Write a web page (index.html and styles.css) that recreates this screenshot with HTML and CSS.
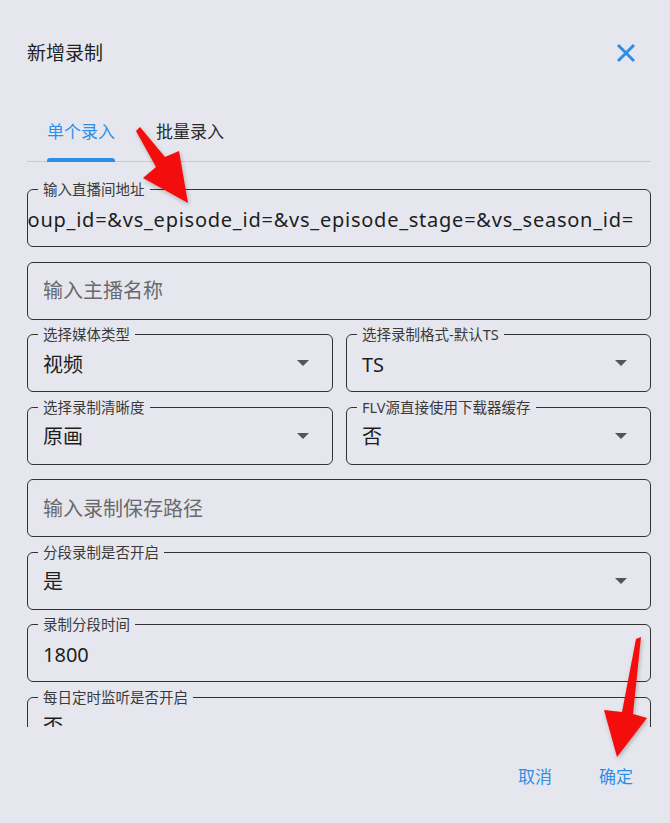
FILE: index.html
```html
<!DOCTYPE html>
<html lang="zh-CN">
<head>
<meta charset="utf-8">
<title>新增录制</title>
<link rel="stylesheet" href="styles.css">
</head>
<body>
<div class="dialog">
  <div class="header">
    <div class="title">新增录制</div>
    <svg class="close" width="20" height="20" viewBox="0 0 20 20"><path d="M2 2 L18 18 M18 2 L2 18" stroke="#2e8ee6" stroke-width="3" fill="none" stroke-linecap="butt"/></svg>
  </div>
  <div class="tabs">
    <div class="tab active"><span class="tab-text">单个录入</span><span class="indicator"></span></div>
    <div class="tab"><span class="tab-text">批量录入</span><span class="indicator"></span></div>
  </div>
  <div class="scroll">
    <div class="field">
      <span class="label">输入直播间地址</span>
      <div class="value url"><span>https://live.example.com/12345?live_from=85001&amp;vs_group_id=&amp;vs_episode_id=&amp;vs_episode_stage=&amp;vs_season_id=</span></div>
    </div>
    <div class="field">
      <div class="value placeholder">输入主播名称</div>
    </div>
    <div class="row">
      <div class="field">
        <span class="label">选择媒体类型</span>
        <div class="value">视频</div>
        <span class="caret"></span>
      </div>
      <div class="field">
        <span class="label">选择录制格式-默认TS</span>
        <div class="value">TS</div>
        <span class="caret"></span>
      </div>
    </div>
    <div class="row">
      <div class="field">
        <span class="label">选择录制清晰度</span>
        <div class="value">原画</div>
        <span class="caret"></span>
      </div>
      <div class="field">
        <span class="label">FLV源直接使用下载器缓存</span>
        <div class="value">否</div>
        <span class="caret"></span>
      </div>
    </div>
    <div class="field">
      <div class="value placeholder">输入录制保存路径</div>
    </div>
    <div class="field">
      <span class="label">分段录制是否开启</span>
      <div class="value">是</div>
      <span class="caret"></span>
    </div>
    <div class="field">
      <span class="label">录制分段时间</span>
      <div class="value">1800</div>
    </div>
    <div class="field">
      <span class="label">每日定时监听是否开启</span>
      <div class="value">否</div>
      <span class="caret"></span>
    </div>
  </div>
  <div class="footer">
    <span class="btn">取消</span>
    <span class="btn">确定</span>
  </div>
</div>
<svg class="annot" width="670" height="823" viewBox="0 0 670 823">
  <defs>
    <filter id="sh" x="-20%" y="-20%" width="140%" height="140%">
      <feDropShadow dx="1" dy="2" stdDeviation="2" flood-color="#000" flood-opacity="0.25"/>
    </filter>
  </defs>
  <polygon filter="url(#sh)" fill="#f40a0a" points="136,131 140,127 165,157 179,151 188,203 143,178 156,167"/>
  <polygon filter="url(#sh)" fill="#f40a0a" points="636,639 641,637 633,714 647,718 617,757 604,710 622,712"/>
</svg>
</body>
</html>
```

FILE: styles.css
```css
html, body {
  margin: 0;
  padding: 0;
}
body {
  width: 670px;
  height: 823px;
  overflow: hidden;
  background: #e6e7ee;
  font-family: "Noto Sans", "Noto Sans CJK SC", sans-serif;
  color: #1e1e1e;
  position: relative;
}
.dialog {
  display: flex;
  flex-direction: column;
  height: 823px;
  padding: 0 19px 0 27px;
}
.header {
  height: 106px;
  display: flex;
  align-items: center;
  justify-content: space-between;
}
.title {
  font-size: 19px;
  line-height: 24px;
  color: #222;
}
.close {
  margin-right: 15px;
}
.tabs {
  display: flex;
  gap: 41px;
  padding-left: 20px;
  border-bottom: 1px solid #c9cad3;
  height: 55px;
}
.tab {
  display: flex;
  flex-direction: column;
  align-items: stretch;
  margin-bottom: -1px;
}
.tab-text {
  font-size: 17px;
  line-height: 20px;
  padding-top: 16px;
  padding-bottom: 16px;
  color: #2a2a2a;
}
.tab .indicator {
  height: 4px;
  border-radius: 3px 3px 0 0;
  background: transparent;
}
.tab.active .tab-text {
  color: #2e8ee6;
}
.tab.active .indicator {
  background: #2e8ee6;
}
.scroll {
  height: 565px;
  overflow: hidden;
  padding-top: 27px;
  box-sizing: border-box;
  display: flex;
  flex-direction: column;
  gap: 14.5px;
}
.row {
  display: grid;
  grid-template-columns: 306px 305px;
  gap: 13px;
}
.field {
  position: relative;
  box-sizing: border-box;
  height: 58px;
  flex: none;
  border: 1.2px solid #333;
  border-radius: 6px;
  display: flex;
  align-items: center;
}
.label {
  position: absolute;
  top: -10px;
  left: 10px;
  padding: 0 5px;
  background: #e6e7ee;
  font-size: 14.5px;
  line-height: 18px;
  color: #3a3a3a;
  white-space: nowrap;
}
.value {
  flex: 1;
  font-size: 20px;
  line-height: 26px;
  padding-left: 15px;
  padding-top: 3px;
  white-space: nowrap;
  overflow: hidden;
}
.value.placeholder {
  padding-top: 1px;
}
.value.url {
  padding-left: 0;
  padding-right: 16px;
  display: flex;
  justify-content: flex-end;
  letter-spacing: 0.75px;
}
.value.url span {
  flex: none;
}
.placeholder {
  color: #6a6a6c;
}
.caret {
  width: 0;
  height: 0;
  border-left: 6px solid transparent;
  border-right: 6px solid transparent;
  border-top: 6px solid #555;
  margin-right: 23px;
}
.footer {
  flex: 1;
  display: flex;
  justify-content: flex-end;
  align-items: flex-start;
  gap: 31px;
  padding-top: 38px;
  padding-right: 10px;
}
.btn {
  font-size: 17px;
  line-height: 24px;
  color: #2e8ee6;
  padding: 0 8px;
}
.annot {
  position: absolute;
  left: 0;
  top: 0;
  pointer-events: none;
}
```
